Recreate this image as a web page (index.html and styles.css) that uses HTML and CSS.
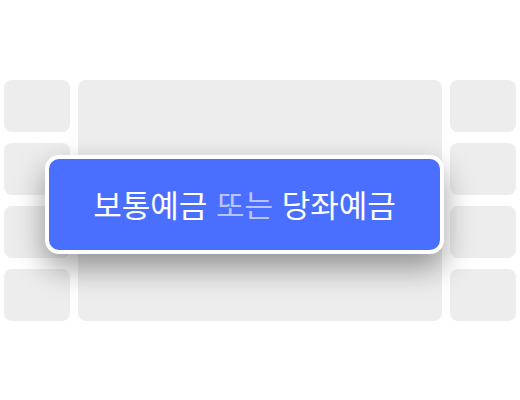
FILE: index.html
```html
<!DOCTYPE html>
<html lang="ko">
<head>
<meta charset="utf-8">
<link rel="stylesheet" href="styles.css">
</head>
<body>
<div class="stage">
  <div class="grid">
    <div class="cell"></div>
    <div class="cell wide"></div>
    <div class="cell"></div>
    <div class="cell"></div>
    <div class="cell"></div>
    <div class="cell"></div>
    <div class="cell"></div>
    <div class="cell"></div>
    <div class="cell"></div>
    <div class="cell"></div>
  </div>
  <div class="badge">보통예금 <span class="dim">또는</span> 당좌예금</div>
</div>
</body>
</html>
```
FILE: styles.css
```css
html, body {
  margin: 0;
  padding: 0;
  background: #ffffff;
}
.stage {
  position: relative;
  width: 520px;
  height: 400px;
  padding-top: 80px;
  box-sizing: border-box;
}
.grid {
  margin: 0 4px;
  display: grid;
  grid-template-columns: 66px 364px 66px;
  grid-template-rows: repeat(4, 52px);
  column-gap: 8px;
  row-gap: 11px;
}
.cell {
  background: #ededed;
  border-radius: 8px;
}
.wide {
  grid-column: 2;
  grid-row: 1 / span 4;
}
.badge {
  position: absolute;
  left: 45px;
  top: 155px;
  width: 399px;
  height: 99px;
  box-sizing: border-box;
  border: 4px solid #ffffff;
  border-radius: 14px;
  background: #4a6fff;
  box-shadow: 0 14px 30px rgba(0, 0, 0, 0.38);
  display: flex;
  align-items: center;
  justify-content: center;
  padding-bottom: 2px;
  color: #ffffff;
  font-family: "Noto Sans CJK KR", "Noto Sans", sans-serif;
  font-size: 31px;
  font-weight: 400;
  white-space: pre;
}
.dim {
  color: #b9c4ff;
}
```
